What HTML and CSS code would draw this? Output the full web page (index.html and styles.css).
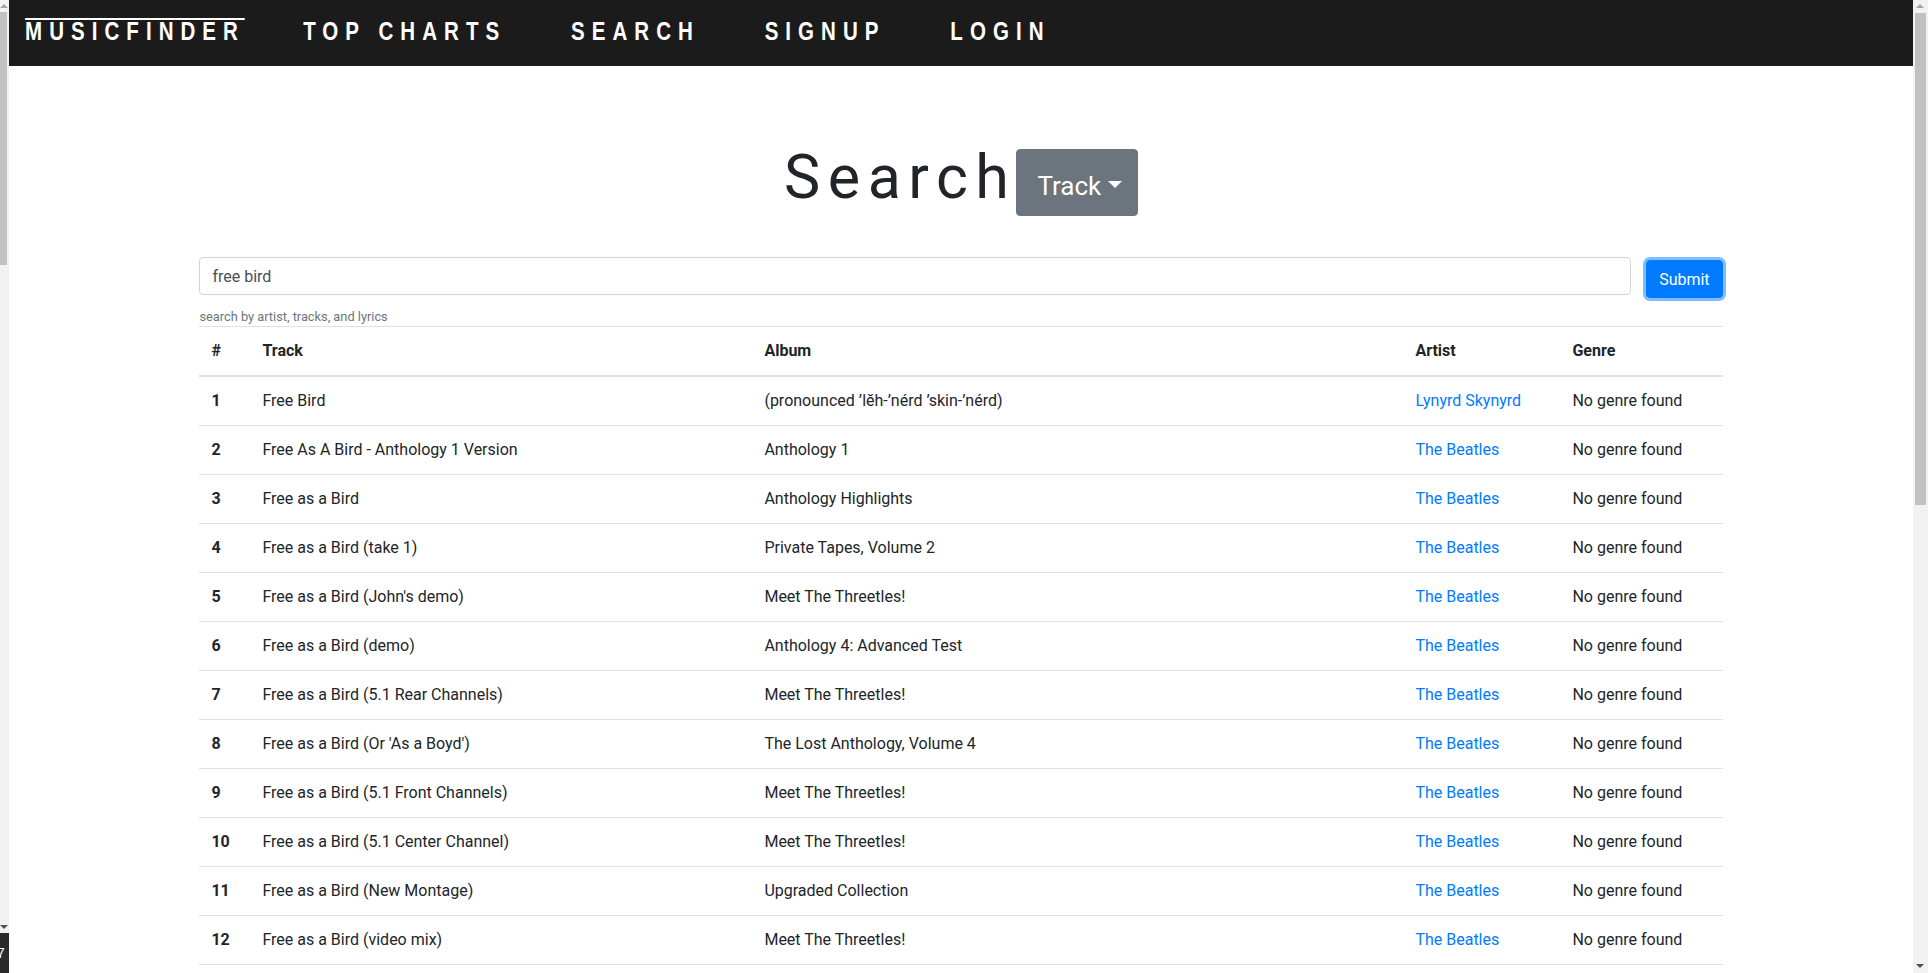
FILE: index.html
```html
<!DOCTYPE html>
<html lang="en">
<head>
<meta charset="utf-8">
<title>MusicFinder - Search</title>
<link rel="stylesheet" href="styles.css">
</head>
<body>
<div class="side-strip">
  <div class="side-arrow up"></div>
  <div class="side-thumb"></div>
  <div class="side-arrow down"></div>
  <div class="side-box"><span>7</span></div>
</div>
<div class="frame">
  <nav class="topnav">
    <div class="nav-inner">
      <a class="brand" href="#">MUSICFINDER</a>
      <a class="nav-link" href="#">TOP CHARTS</a>
      <a class="nav-link" href="#">SEARCH</a>
      <a class="nav-link" href="#">SIGNUP</a>
      <a class="nav-link" href="#">LOGIN</a>
    </div>
  </nav>
  <main class="container">
    <div class="title-row">
      <h1 class="title">Search</h1>
      <button class="type-btn" type="button">Track</button>
    </div>
    <form class="search-form">
      <input class="search-input" type="text" value="free bird">
      <button class="submit-btn" type="button">Submit</button>
    </form>
    <small class="form-text">search by artist, tracks, and lyrics</small>
    <table class="results">
      <colgroup>
        <col class="c-num"><col class="c-track"><col class="c-album"><col class="c-artist"><col class="c-genre">
      </colgroup>
      <thead>
        <tr><th>#</th><th>Track</th><th>Album</th><th>Artist</th><th>Genre</th></tr>
      </thead>
      <tbody>
        <tr><th>1</th><td>Free Bird</td><td>(pronounced ’lĕh-’nérd ’skin-’nérd)</td><td><a href="#">Lynyrd Skynyrd</a></td><td>No genre found</td></tr>
        <tr><th>2</th><td>Free As A Bird - Anthology 1 Version</td><td>Anthology 1</td><td><a href="#">The Beatles</a></td><td>No genre found</td></tr>
        <tr><th>3</th><td>Free as a Bird</td><td>Anthology Highlights</td><td><a href="#">The Beatles</a></td><td>No genre found</td></tr>
        <tr><th>4</th><td>Free as a Bird (take 1)</td><td>Private Tapes, Volume 2</td><td><a href="#">The Beatles</a></td><td>No genre found</td></tr>
        <tr><th>5</th><td>Free as a Bird (John's demo)</td><td>Meet The Threetles!</td><td><a href="#">The Beatles</a></td><td>No genre found</td></tr>
        <tr><th>6</th><td>Free as a Bird (demo)</td><td>Anthology 4: Advanced Test</td><td><a href="#">The Beatles</a></td><td>No genre found</td></tr>
        <tr><th>7</th><td>Free as a Bird (5.1 Rear Channels)</td><td>Meet The Threetles!</td><td><a href="#">The Beatles</a></td><td>No genre found</td></tr>
        <tr><th>8</th><td>Free as a Bird (Or 'As a Boyd')</td><td>The Lost Anthology, Volume 4</td><td><a href="#">The Beatles</a></td><td>No genre found</td></tr>
        <tr><th>9</th><td>Free as a Bird (5.1 Front Channels)</td><td>Meet The Threetles!</td><td><a href="#">The Beatles</a></td><td>No genre found</td></tr>
        <tr><th>10</th><td>Free as a Bird (5.1 Center Channel)</td><td>Meet The Threetles!</td><td><a href="#">The Beatles</a></td><td>No genre found</td></tr>
        <tr><th>11</th><td>Free as a Bird (New Montage)</td><td>Upgraded Collection</td><td><a href="#">The Beatles</a></td><td>No genre found</td></tr>
        <tr><th>12</th><td>Free as a Bird (video mix)</td><td>Meet The Threetles!</td><td><a href="#">The Beatles</a></td><td>No genre found</td></tr>
        <tr class="row-tail"><th></th><td></td><td></td><td></td><td></td></tr>
      </tbody>
    </table>
  </main>
</div>
<div class="vscroll">
  <div class="vs-arrow up"></div>
  <div class="vs-thumb"></div>
  <div class="vs-track"></div>
  <div class="vs-arrow down"></div>
</div>
</body>
</html>
```

FILE: styles.css
```css
html, body {
  margin: 0;
  height: 100%;
  overflow: hidden;
}
body {
  display: flex;
  background: #ffffff;
  font-family: Roboto, "Liberation Sans", sans-serif;
  font-size: 16px;
  line-height: 1.5;
  color: #212529;
}

/* left strip (neighbouring window scrollbar) */
.side-strip {
  width: 9px;
  flex: none;
  background: #f1f1f1;
  display: flex;
  flex-direction: column;
}
.side-arrow {
  height: 12px;
  width: 7px;
  position: relative;
  flex: none;
}
.side-arrow::after {
  content: "";
  position: absolute;
  left: 0;
  top: 4px;
  border-left: 4px solid transparent;
  border-right: 4px solid transparent;
}
.side-arrow.up::after { border-bottom: 4px solid #a3a3a3; }
.side-arrow.down::after { border-top: 4px solid #505050; }
.side-thumb {
  width: 7px;
  height: 253px;
  background: #c1c1c1;
  flex: none;
}
.side-arrow.down { margin-top: auto; }
.side-box {
  height: 40px;
  flex: none;
  background: #2b2b2b;
  overflow: hidden;
  color: #ffffff;
  font-family: "Liberation Sans", sans-serif;
  font-size: 14px;
  line-height: 40px;
}
.side-box span {
  display: block;
  margin-left: -3px;
}

/* right page scrollbar */
.vscroll {
  width: 15px;
  flex: none;
  background: #f1f1f1;
  display: flex;
  flex-direction: column;
  align-items: center;
}
.vs-arrow {
  height: 13px;
  width: 15px;
  position: relative;
  flex: none;
}
.vs-arrow::after {
  content: "";
  position: absolute;
  left: 3px;
  top: 4px;
  border-left: 4px solid transparent;
  border-right: 4px solid transparent;
}
.vs-arrow.up::after { border-bottom: 4px solid #a3a3a3; }
.vs-arrow.down::after { border-top: 4px solid #505050; }
.vs-thumb {
  width: 11px;
  height: 492px;
  background: #c1c1c1;
  flex: none;
}
.vs-track { flex: 1; }

/* page frame */
.frame {
  flex: 1;
  min-width: 0;
  overflow: hidden;
}

.topnav {
  height: 66px;
  background: #1b1b1b;
  padding-left: 16px;
  box-sizing: border-box;
  overflow: hidden;
}
.nav-inner {
  display: flex;
  align-items: baseline;
  padding-top: 18px;
  transform: scaleX(0.82);
  transform-origin: 0 0;
  white-space: nowrap;
}
.nav-inner a {
  color: #ffffff;
  text-decoration: none;
  font-family: "Liberation Sans", Arial, sans-serif;
  font-weight: 700;
  font-size: 25px;
  letter-spacing: 8.6px;
  line-height: 22px;
}
.nav-inner .brand {
  display: inline-block;
  border-top: 2px solid #ffffff;
  margin-right: 71px;
}
.nav-inner .nav-link {
  margin-right: 79px;
}

.container {
  width: 80%;
  margin: 0 auto;
}

.title-row {
  display: flex;
  justify-content: center;
  align-items: flex-start;
  margin-top: 70px;
}
.title {
  margin: 5px 0 0;
  font-family: Roboto, sans-serif;
  font-weight: 400;
  font-size: 61px;
  line-height: 1.2;
  letter-spacing: 7.5px;
  color: #212529;
}
.type-btn {
  margin-top: 13px;
  height: 67px;
  box-sizing: border-box;
  padding: 7px 15px 0 20px;
  border: 1px solid #6c757d;
  border-radius: 4px;
  background: #6c757d;
  color: #ffffff;
  font-family: Roboto, sans-serif;
  font-size: 26px;
  line-height: 1.5;
}
.type-btn::after {
  content: "";
  display: inline-block;
  margin-left: 0.255em;
  vertical-align: 0.255em;
  border-top: 0.3em solid;
  border-left: 0.3em solid transparent;
  border-right: 0.3em solid transparent;
}

.search-form {
  display: flex;
  align-items: flex-start;
  margin: 41px 0 0;
}
.search-input {
  flex: 1;
  height: 38px;
  box-sizing: border-box;
  padding: 6px 12px;
  border: 1px solid #ced4da;
  border-radius: 4px;
  font-family: Roboto, sans-serif;
  font-size: 16px;
  color: #495057;
}
.submit-btn {
  margin-left: 15px;
  margin-top: 3px;
  height: 38px;
  padding: 0 12px;
  border: 1px solid #007bff;
  border-radius: 4px;
  background: #007bff;
  color: #ffffff;
  font-family: Roboto, sans-serif;
  font-size: 16px;
  box-shadow: 0 0 0 3px rgba(0, 123, 255, 0.5);
}

.form-text {
  display: block;
  margin-top: 9px;
  font-size: 12.8px;
  line-height: 19px;
  color: #6c757d;
}

.results {
  width: 100%;
  margin-top: 0;
  border-collapse: collapse;
  table-layout: fixed;
}
.c-num { width: 51px; }
.c-track { width: 502px; }
.c-album { width: 651px; }
.c-artist { width: 157px; }
.c-genre { width: auto; }
.results th,
.results td {
  padding: 12px;
  height: 24px;
  text-align: left;
  vertical-align: top;
  border-top: 1px solid #dee2e6;
  white-space: nowrap;
  overflow: hidden;
}
.results th { font-weight: 700; }
.results td { font-weight: 400; }
.results thead th {
  border-bottom: 2px solid #dee2e6;
}
.results a {
  color: #007bff;
  text-decoration: none;
}
```
